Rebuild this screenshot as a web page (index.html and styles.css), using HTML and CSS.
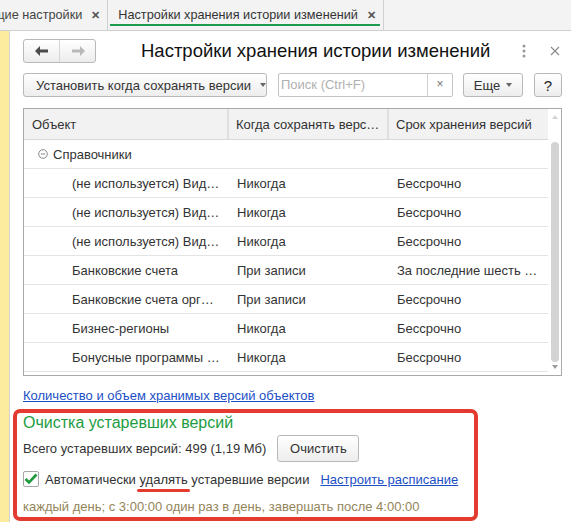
FILE: index.html
```html
<!DOCTYPE html>
<html lang="ru">
<head>
    <meta charset="UTF-8">
    <title>Настройки хранения истории изменений</title>
    <link rel="stylesheet" href="styles.css">
</head>
<body>
    <div class="tabs">
        <div class="tab-strip">
            <div class="tab">Общие настройки <span class="tab-close">&#x2715;</span></div>
            <div class="tab tab-active">Настройки хранения истории изменений <span class="tab-close">&#x2715;</span></div>
        </div>
    </div>
    <div class="main">
        <div class="side"></div>
        <div class="form">
            <div class="head">
                <div class="nav">
                    <span class="nav-btn">
                        <svg width="14" height="10" viewBox="0 0 14 10"><path d="M0 5 L5 0 L5 3.5 L13 3.5 L13 6.5 L5 6.5 L5 10 Z" fill="#4a4a4a"/></svg>
                    </span>
                    <span class="nav-btn">
                        <svg width="14" height="10" viewBox="0 0 14 10"><path d="M14 5 L9 0 L9 3.5 L1 3.5 L1 6.5 L9 6.5 L9 10 Z" fill="#b8b8b8"/></svg>
                    </span>
                </div>
                <h1 class="title">Настройки хранения истории изменений</h1>
                <span class="kebab">
                    <svg width="4" height="14" viewBox="0 0 4 14"><circle cx="2" cy="2" r="1.5" fill="#999"/><circle cx="2" cy="7" r="1.5" fill="#999"/><circle cx="2" cy="12" r="1.5" fill="#999"/></svg>
                </span>
                <span class="form-close">
                    <svg width="10" height="10" viewBox="0 0 10 10"><path d="M1 1 L9 9 M9 1 L1 9" stroke="#8a8a8a" stroke-width="1.1"/></svg>
                </span>
            </div>

            <div class="toolbar">
                <span class="btn btn-wide">Установить когда сохранять версии <span class="caret"></span></span>
                <span class="search">
                    <span class="search-text">Поиск (Ctrl+F)</span>
                    <span class="search-clear">&#x00D7;</span>
                </span>
                <span class="btn btn-more">Еще <span class="caret"></span></span>
                <span class="btn btn-help">?</span>
            </div>

            <div class="grid">
                <div class="grid-body">
                    <div class="row row-head">
                        <div class="cell c1">Объект</div>
                        <div class="cell c2">Когда сохранять верс…</div>
                        <div class="cell c3">Срок хранения версий</div>
                    </div>
                    <div class="row">
                        <div class="cell group">
                            <svg width="10" height="10" viewBox="0 0 10 10"><circle cx="5" cy="5" r="4.3" fill="none" stroke="#8a8a8a"/><path d="M2.8 5 H7.2" stroke="#8a8a8a"/></svg>
                            Справочники
                        </div>
                    </div>
                    <div class="row"><div class="cell c1 child">(не используется) Вид…</div><div class="cell c2">Никогда</div><div class="cell c3">Бессрочно</div></div>
                    <div class="row"><div class="cell c1 child">(не используется) Вид…</div><div class="cell c2">Никогда</div><div class="cell c3">Бессрочно</div></div>
                    <div class="row"><div class="cell c1 child">(не используется) Вид…</div><div class="cell c2">Никогда</div><div class="cell c3">Бессрочно</div></div>
                    <div class="row"><div class="cell c1 child">Банковские счета</div><div class="cell c2">При записи</div><div class="cell c3">За последние шесть …</div></div>
                    <div class="row"><div class="cell c1 child">Банковские счета орг…</div><div class="cell c2">При записи</div><div class="cell c3">Бессрочно</div></div>
                    <div class="row"><div class="cell c1 child">Бизнес-регионы</div><div class="cell c2">Никогда</div><div class="cell c3">Бессрочно</div></div>
                    <div class="row"><div class="cell c1 child">Бонусные программы …</div><div class="cell c2">Никогда</div><div class="cell c3">Бессрочно</div></div>
                </div>
                <div class="scroll">
                    <span class="arrow-up"></span>
                    <span class="thumb"></span>
                    <span class="arrow-down"></span>
                </div>
            </div>

            <a class="link link-count" href="#">Количество и объем хранимых версий объектов</a>

            <div class="cleanup">
                <div class="cleanup-title">Очистка устаревших версий</div>
                <div class="cleanup-line">
                    <span>Всего устаревших версий: 499 (1,19 Мб)</span>
                    <span class="btn btn-clear">Очистить</span>
                </div>
                <div class="cleanup-auto">
                    <span class="check">
                        <svg width="14" height="12" viewBox="0 0 14 12"><path d="M1.5 6 L5 9.5 L12.5 1.5" fill="none" stroke="#1e9a3c" stroke-width="2.6"/></svg>
                    </span>
                    <span>Автоматически <span class="mark">удалять</span> устаревшие версии</span>
                    <a class="link" href="#">Настроить расписание</a>
                </div>
                <div class="schedule">каждый день; с 3:00:00 один раз в день, завершать после 4:00:00</div>
            </div>
        </div>
    </div>
</body>
</html>
```

FILE: styles.css
```css
/* General */
body {
    margin: 0;
    width: 571px;
    height: 522px;
    overflow: hidden;
    font-family: "Liberation Sans", Arial, sans-serif;
    font-size: 13px;
    color: #333;
    background: #fff;
}

/* Tabs */
.tabs {
    height: 30px;
    background: #f3f3f3;
    border-bottom: 1px solid #cfcfcf;
    overflow: hidden;
}
.tab-strip {
    display: flex;
    height: 30px;
    margin-left: -33px;
}
.tab {
    display: flex;
    align-items: center;
    padding: 0 7px 0 10px;
    border-right: 1px solid #cfcfcf;
    font-size: 12.7px;
    color: #444;
    white-space: nowrap;
}
.tab-active {
    position: relative;
    color: #333;
}
.tab-active::after {
    content: "";
    position: absolute;
    left: 2px;
    right: 3px;
    bottom: 4px;
    height: 2px;
    background: #1d9a4e;
}
.tab-close {
    margin-left: 9px;
    font-size: 11px;
    font-weight: bold;
    color: #555;
}

/* Layout */
.main {
    display: flex;
    height: 491px;
}
.side {
    width: 9px;
    background: #fbec9e;
    border-right: 1px solid #d2d2d2;
}
.form {
    flex: 1;
    padding: 8px 9px 0 13px;
}

/* Form header */
.head {
    display: flex;
    align-items: center;
    height: 24px;
}
.nav {
    display: flex;
    height: 22px;
    border: 1px solid #b9b9b9;
    border-radius: 3px;
    background: linear-gradient(#ffffff, #ececec);
}
.nav-btn {
    display: flex;
    align-items: center;
    justify-content: center;
    width: 35px;
}
.nav-btn + .nav-btn {
    border-left: 1px solid #d6d6d6;
}
.title {
    margin: 0 0 0 45px;
    font-size: 18.5px;
    font-weight: normal;
    color: #111;
    white-space: nowrap;
}
.kebab {
    display: flex;
    margin-left: 32px;
}
.form-close {
    display: flex;
    margin-left: 24px;
}

/* Toolbar */
.toolbar {
    display: flex;
    align-items: center;
    margin-top: 10px;
    height: 24px;
}
.btn {
    display: inline-flex;
    align-items: center;
    justify-content: center;
    box-sizing: border-box;
    height: 24px;
    border: 1px solid #b9b9b9;
    border-radius: 3px;
    background: linear-gradient(#ffffff, #ededed);
    color: #333;
    white-space: nowrap;
}
.btn-wide {
    width: 244px;
    justify-content: flex-start;
    padding-left: 12px;
}
.caret {
    display: inline-block;
    margin-left: 9px;
    border-left: 3.5px solid transparent;
    border-right: 3.5px solid transparent;
    border-top: 4px solid #666;
}
.search {
    display: flex;
    box-sizing: border-box;
    width: 175px;
    height: 24px;
    margin-left: 11px;
    border: 1px solid #c4c4c4;
    border-radius: 2px;
}
.search-text {
    flex: 1;
    padding-left: 2px;
    line-height: 22px;
    color: #b0b0b0;
}
.search-clear {
    width: 24px;
    border-left: 1px solid #d0d0d0;
    text-align: center;
    line-height: 21px;
    font-size: 12px;
    color: #777;
}
.btn-more {
    width: 60px;
    margin-left: 10px;
}
.btn-more .caret {
    margin-left: 6px;
}
.btn-help {
    width: 28px;
    margin-left: 11px;
    font-size: 15px;
    color: #222;
}

/* Grid */
.grid {
    display: flex;
    margin-top: 11px;
    width: 539px;
    height: 268px;
    box-sizing: border-box;
    border: 1px solid #a9a9a9;
}
.grid-body {
    width: 524px;
}
.row {
    display: flex;
    height: 28px;
    border-bottom: 1px solid #e4e4e4;
}
.row-head {
    height: 30px;
    background: #f2f2f2;
    border-bottom: 1px solid #d9d9d9;
}
.cell {
    display: flex;
    align-items: center;
    box-sizing: border-box;
    padding-left: 8px;
    white-space: nowrap;
    overflow: hidden;
}
.c1 { width: 205px; }
.c2 { width: 160px; }
.c3 { width: 159px; }
.row-head .c1,
.row-head .c2 {
    border-right: 2px solid #dedede;
}
.row-head .c2,
.row-head .c3 {
    padding-left: 7px;
}
.child {
    padding-left: 48px;
}
.group {
    padding-left: 14px;
}
.group svg {
    margin-right: 5px;
}
.scroll {
    position: relative;
    flex: 1;
    background: #fff;
}
.thumb {
    position: absolute;
    left: 3px;
    top: 33px;
    width: 8px;
    height: 220px;
    border-radius: 4px;
    background: #d3d3d3;
}
.arrow-up,
.arrow-down {
    position: absolute;
    left: 4px;
    border-left: 3px solid transparent;
    border-right: 3px solid transparent;
}
.arrow-up {
    top: 6px;
    border-bottom: 4px solid #d4d4d4;
}
.arrow-down {
    bottom: 6px;
    border-top: 4px solid #9a9a9a;
}

/* Links */
.link {
    color: #1c4fc6;
    text-decoration: underline;
}
.link-count {
    display: block;
    margin-top: 12px;
    line-height: 16px;
}

/* Cleanup section */
.cleanup {
    margin: 5px 0 0 -10px;
    width: 451px;
    height: 104px;
    border: 4px solid #e43b30;
    border-radius: 7px;
    padding: 0 0 0 6px;
}
.cleanup-title {
    font-size: 16px;
    color: #1c9c42;
    line-height: 20px;
}
.cleanup-line {
    display: flex;
    align-items: center;
    margin-top: 2px;
}
.btn-clear {
    width: 82px;
    height: 27px;
    margin-left: 11px;
}
.cleanup-auto {
    display: flex;
    align-items: center;
    margin-top: 6px;
    height: 22px;
}
.check {
    display: flex;
    align-items: center;
    justify-content: center;
    box-sizing: border-box;
    width: 16px;
    height: 16px;
    margin-right: 6px;
    border: 1px solid #a6a6a6;
    border-radius: 2px;
    background: #fff;
}
.mark {
    position: relative;
}
.mark::after {
    content: "";
    position: absolute;
    left: -3px;
    right: -2px;
    bottom: -5px;
    height: 3px;
    border-radius: 2px;
    background: #e43b30;
}
.cleanup-auto .link {
    margin-left: 11px;
}
.schedule {
    margin-top: 9px;
    color: #93855a;
}
```
